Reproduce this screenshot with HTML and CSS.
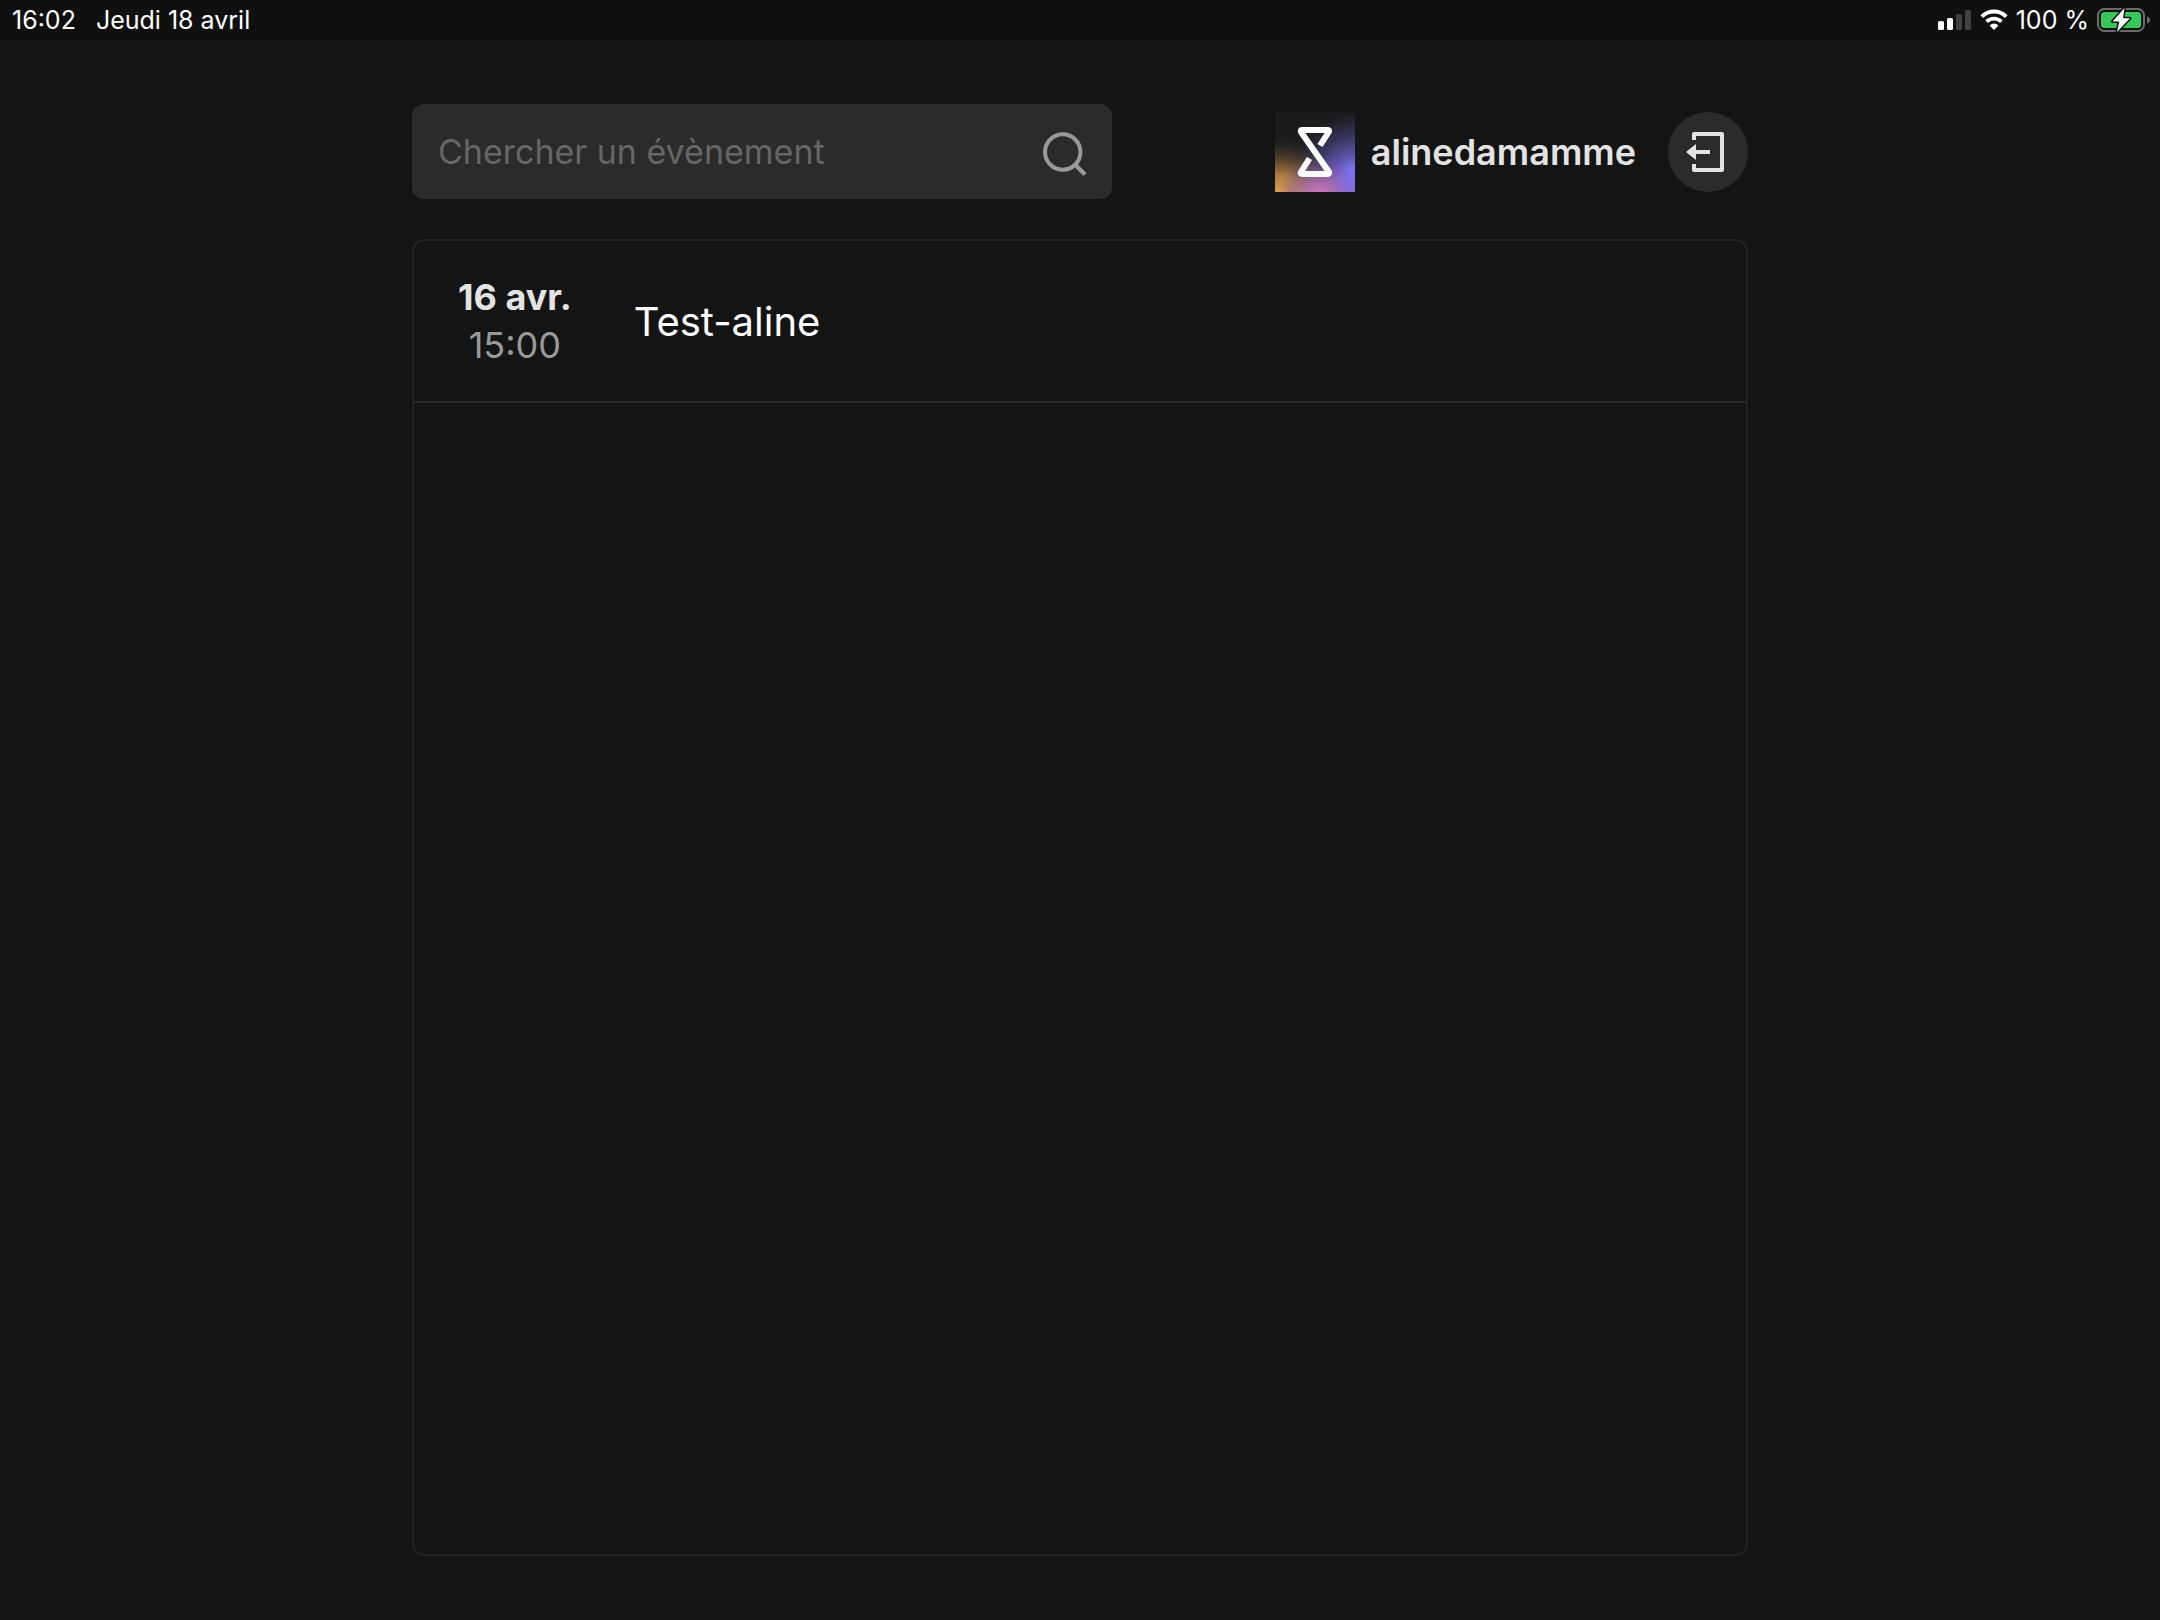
FILE: index.html
```html
<!DOCTYPE html>
<html lang="fr">
<head>
  <meta charset="utf-8">
  <meta name="viewport" content="width=device-width, initial-scale=1">
  <title>Évènements</title>
  <link rel="stylesheet" href="styles.css">
</head>
<body>
  <div class="status-bar">
    <div class="status-left">
      <time>16:02</time>
      <span>Jeudi 18 avril</span>
    </div>
    <div class="status-right">
      <svg class="signal" width="34" height="22" viewBox="0 0 34 22" aria-hidden="true">
        <rect x="0" y="12" width="6" height="9" rx="1.5" fill="#fff"/>
        <rect x="9" y="9" width="6" height="12" rx="1.5" fill="#fff"/>
        <rect x="18" y="5" width="6" height="16" rx="1.5" fill="#414141"/>
        <rect x="27" y="1" width="6" height="20" rx="1.5" fill="#414141"/>
      </svg>
      <svg class="wifi" width="28" height="22" viewBox="0 0 28 22" aria-hidden="true">
        <path d="M1.8 7.6a17.3 17.3 0 0 1 24.4 0" fill="none" stroke="#fff" stroke-width="4"/>
        <path d="M6.6 12.6a10.6 10.6 0 0 1 14.8 0" fill="none" stroke="#fff" stroke-width="3.8"/>
        <path d="M9.6 16.4a6.3 6.3 0 0 1 8.8 0L14 21z" fill="#fff"/>
      </svg>
      <span>100 %</span>
      <svg class="battery" width="53" height="26" viewBox="0 0 53 26" aria-hidden="true">
        <rect x="1" y="2" width="46" height="22" rx="6.5" fill="none" stroke="#6b6b6b" stroke-width="2"/>
        <rect x="4" y="5" width="40" height="16" rx="3.5" fill="#34c759"/>
        <path d="M50 9.500c4 1 4 6 0 7z" fill="#6b6b6b"/>
        <path d="M27.500 1 15.500 14.500h6.800L20 25 33 11.300h-7z" fill="#fff" stroke="#101010" stroke-width="3" stroke-linejoin="round" paint-order="stroke"/>
      </svg>
    </div>
  </div>

  <main class="page">
    <header class="toolbar">
      <form class="search" role="search">
        <input class="search-input" type="text" aria-label="Chercher un évènement" placeholder="Chercher un évènement">
        <button class="search-button" type="button" aria-label="Chercher">
          <svg width="48" height="48" viewBox="0 0 48 48" aria-hidden="true">
            <circle cx="22.700" cy="24" r="17.700" fill="none" stroke="#999" stroke-width="4"/>
            <path d="M34.800 36.300 45 46.500" stroke="#999" stroke-width="4.200"/>
          </svg>
        </button>
      </form>
      <div class="account">
        <svg class="avatar" width="80" height="80" viewBox="0 0 80 80" aria-hidden="true">
          <defs>
            <radialGradient id="violet" gradientUnits="userSpaceOnUse" cx="84" cy="72" r="72">
              <stop offset="0" stop-color="#8378fa"/>
              <stop offset=".25" stop-color="#7a6eea"/>
              <stop offset=".6" stop-color="#5653a0" stop-opacity=".65"/>
              <stop offset="1" stop-color="#3c3f70" stop-opacity="0"/>
            </radialGradient>
            <radialGradient id="amber" gradientUnits="userSpaceOnUse" cx="4" cy="86" r="60">
              <stop offset="0" stop-color="#f0aa54"/>
              <stop offset=".4" stop-color="#c08a4c" stop-opacity=".85"/>
              <stop offset="1" stop-color="#4a3a28" stop-opacity="0"/>
            </radialGradient>
            <radialGradient id="pink" gradientUnits="userSpaceOnUse" cx="45" cy="86" r="42">
              <stop offset="0" stop-color="#dc80cc"/>
              <stop offset=".4" stop-color="#be72ba" stop-opacity=".75"/>
              <stop offset="1" stop-color="#76529a" stop-opacity="0"/>
            </radialGradient>
          </defs>
          <rect width="80" height="80" fill="#1b1b1d"/>
          <rect width="80" height="80" fill="url(#violet)"/>
          <rect width="80" height="80" fill="url(#amber)"/>
          <rect width="80" height="80" fill="url(#pink)"/>
          <path d="M45 33.500 54 19.500Q54.500 18 53 18H27Q25 18 26 20L54 60Q54.500 62 53 62H27Q25 62 26 60L34.500 46.500" fill="none" stroke="#fff" stroke-width="6" stroke-linejoin="round"/>
        </svg>
        <span class="account-name">alinedamamme</span>
        <button class="logout" type="button" aria-label="Se déconnecter">
          <svg width="80" height="80" viewBox="0 0 80 80" aria-hidden="true">
            <path d="M26 28V22H54V58H26V52" fill="none" stroke="#e3e3e3" stroke-width="4" stroke-linejoin="round"/>
            <path d="M18 40 28 32V38H42V42H28V48Z" fill="#e3e3e3"/>
          </svg>
        </button>
      </div>
    </header>

    <ul class="events">
      <li class="event">
        <a class="event-link" href="#">
          <time class="event-when">
            <strong class="event-date">16 avr.</strong>
            <span class="event-hour">15:00</span>
          </time>
          <span class="event-title">Test-aline</span>
        </a>
      </li>
    </ul>
  </main>
</body>
</html>
```

FILE: styles.css
```css
* {
  box-sizing: border-box;
}

body {
  margin: 0;
  min-height: 100vh;
  display: flex;
  flex-direction: column;
  background: #141414;
  color: #fff;
  font-family: Inter, "Liberation Sans", sans-serif;
  font-size: 36px;
}

button {
  padding: 0;
  border: 0;
  background: none;
  cursor: pointer;
}

svg {
  display: block;
  flex: none;
}

.status-bar {
  display: flex;
  justify-content: space-between;
  height: 40px;
  padding: 0 10px 0 12px;
  background: #101010;
  font-size: 25px;
  line-height: 40px;
}

.status-left,
.status-right {
  display: flex;
  align-items: center;
}

.status-left {
  gap: 20px;
}

.status-right {
  gap: 8px;
}

.page {
  flex: 1;
  display: flex;
  flex-direction: column;
  gap: 40px;
  width: 100%;
  max-width: 1400px;
  margin: 0 auto;
  padding: 64px 32px;
}

.toolbar {
  display: flex;
  align-items: center;
  justify-content: space-between;
  gap: 32px;
}

.search {
  flex: 0 1 700px;
  display: flex;
  align-items: center;
  height: 95px;
  padding: 0 24px 0 26px;
  border-radius: 12px;
  background: #2b2b2b;
}

.search-input {
  flex: 1;
  min-width: 0;
  padding: 0;
  border: 0;
  outline: 0;
  background: none;
  color: #fff;
  font: inherit;
  font-size: 34px;
}

.search-input::placeholder {
  color: #666;
  opacity: 1;
}

.account {
  display: flex;
  align-items: center;
}

.account-name {
  margin: 0 32px 0 16px;
  color: #e3e3e3;
  font-weight: 600;
}

.logout {
  border-radius: 50%;
  background: #2b2b2b;
}

.events {
  flex: 1;
  margin: 0;
  padding: 0;
  list-style: none;
  border: 2px solid #222;
  border-radius: 12px;
}

.event {
  border-bottom: 2px solid #2b2b2b;
}

.event-link {
  display: flex;
  align-items: center;
  gap: 62px;
  padding: 32px 44px;
  color: inherit;
  text-decoration: none;
}

.event-when {
  display: flex;
  flex-direction: column;
  align-items: center;
  line-height: 48px;
}

.event-date {
  color: #e3e3e3;
  font-weight: 700;
}

.event-hour {
  color: #999;
}

.event-title {
  font-size: 40px;
}
```
